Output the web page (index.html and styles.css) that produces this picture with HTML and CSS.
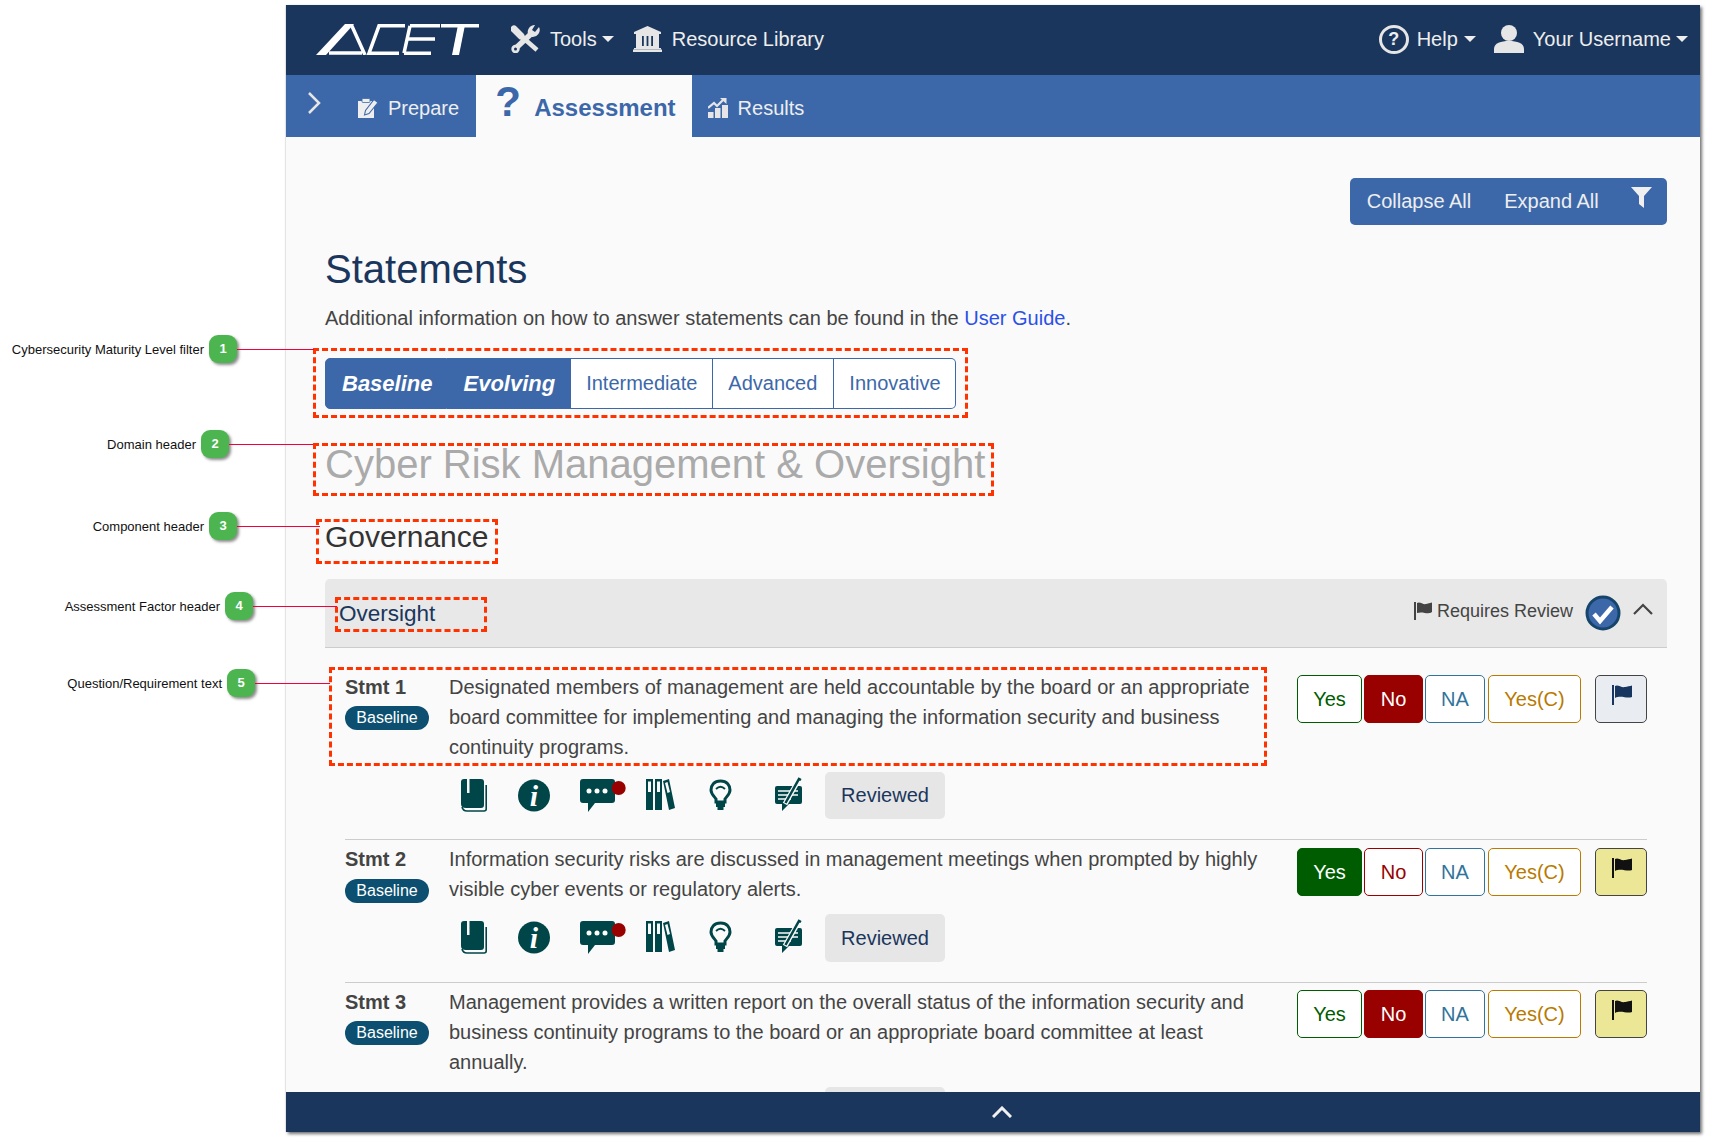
FILE: index.html
```html
<!DOCTYPE html>
<html lang="en">
<head>
    <meta charset="UTF-8">
    <title>ACET - Statements</title>
    <link rel="stylesheet" href="styles.css">
</head>
<body>
    <div class="app">
        <header class="topnav">
            <svg class="logo" viewBox="0 0 163 31" aria-label="ACET">
                <polygon points="0,31 29,0 38,0 10,31" fill="#fff"/>
                <path d="M35 0 L49 31 M13 29 H46 M89 1.8 H63 L53 29.200 H83 M94 1.8 H124 M91 15 H119 M88 29.200 H115 M94 1.8 L88 29.200 M125 1.8 H163" stroke="#fff" stroke-width="3.500" fill="none"/>
                <polygon points="142,1 149,1 143,31 136,31" fill="#fff"/>
            </svg>
            <a class="nav-link nav-tools">
                <svg class="nav-ico" viewBox="0 0 29 28">
                    <path d="M3 4 L10 11" stroke="#e6e6e6" stroke-width="7" stroke-linecap="round"/>
                    <path d="M10 11 L26 25" stroke="#e6e6e6" stroke-width="4.500"/>
                    <path d="M21 8 L5 23" stroke="#e6e6e6" stroke-width="5.500"/>
                    <path d="M28 2 L24 7 L21 5 L24 0 A7 7 0 0 0 17 9 L21 12 A7 7 0 0 0 28 2 Z" fill="#e6e6e6"/>
                    <circle cx="4.500" cy="24" r="4.200" fill="#e6e6e6"/>
                    <circle cx="4.500" cy="24" r="1.500" fill="#1a365d"/>
                </svg>
                Tools<span class="caret"></span>
            </a>
            <a class="nav-link nav-library">
                <svg class="nav-ico" viewBox="0 0 29 26">
                    <polygon points="14.500,0 28,6 28,8 1,8 1,6" fill="#e6e6e6"/>
                    <rect x="3" y="8" width="23" height="14" fill="#e6e6e6"/>
                    <path d="M9 10 h1.800 v10 h-1.800 z M13.600 10 h1.800 v10 h-1.800 z M18.200 10 h1.800 v10 h-1.800 z" fill="#1a365d"/>
                    <rect x="1" y="22" width="27" height="1.500" fill="#e6e6e6"/>
                    <rect x="0" y="23.500" width="29" height="2.500" fill="#e6e6e6"/>
                </svg>
                Resource Library
            </a>
            <div class="nav-right">
                <a class="nav-link nav-help"><span class="help-ico">?</span>Help<span class="caret"></span></a>
                <a class="nav-link nav-user">
                    <svg class="nav-ico user-ico" viewBox="0 0 30 28">
                        <circle cx="15" cy="8" r="8" fill="#e6e6e6"/>
                        <path d="M0 28 V24 C0 18 7 16 15 16 C23 16 30 18 30 24 V28 Z" fill="#e6e6e6"/>
                    </svg>
                    Your Username<span class="caret"></span>
                </a>
            </div>
        </header>

        <nav class="subnav">
            <svg class="side-toggle" viewBox="0 0 14 22"><polyline points="2,1 12,11 2,21" fill="none" stroke="#e6e6e6" stroke-width="2.500"/></svg>
            <a class="tab tab-prepare">
                <svg class="tab-ico" viewBox="0 0 20 20">
                    <rect x="0" y="3" width="16" height="17" fill="#eee"/>
                    <rect x="4" y="0.500" width="8" height="4" rx="1" fill="#eee" stroke="#3c68aa" stroke-width="0.800"/>
                    <path d="M6.500 17 L7.500 12.500 L16 1.500 L20 4.500 L11 15.500 Z" fill="#eee" stroke="#3c68aa" stroke-width="1.100"/>
                </svg>
                Prepare
            </a>
            <a class="tab tab-active"><span class="tab-q">?</span>Assessment</a>
            <a class="tab tab-results">
                <svg class="tab-ico" viewBox="0 0 20 20">
                    <path d="M0 14 h5.500 v6 h-5.500 z M7 10 h5.500 v10 h-5.500 z M14 7 h6 v13 h-6 z" fill="#e6e6e6"/>
                    <path d="M0 10 L6 5 L9 8 L15 2" fill="none" stroke="#e6e6e6" stroke-width="2.200"/>
                    <polygon points="12,0 18.500,0 18.500,6" fill="#e6e6e6"/>
                </svg>
                Results
            </a>
        </nav>

        <main class="content">
            <div class="toolbar">
                <div class="btn-group">
                    <button class="tool-btn tool-collapse">Collapse All</button>
                    <button class="tool-btn tool-expand">Expand All</button>
                    <button class="tool-btn tool-filter">
                        <svg class="filter-ico" viewBox="0 0 21 21"><polygon points="0,0 21,0 13,9 13,21 8,17 8,9" fill="#f0f0f0"/></svg>
                    </button>
                </div>
            </div>

            <h1 class="page-title">Statements</h1>
            <p class="intro">Additional information on how to answer statements can be found in the <a class="link">User Guide</a>.</p>

            <div class="levels">
                <span class="level level-on level-first">Baseline</span>
                <span class="level level-on level-second">Evolving</span>
                <span class="level level-third">Intermediate</span>
                <span class="level">Advanced</span>
                <span class="level level-last">Innovative</span>
            </div>

            <h2 class="domain">Cyber Risk Management &amp; Oversight</h2>
            <h3 class="component">Governance</h3>

            <div class="factor">
                <span class="factor-name">Oversight</span>
                <span class="review-note">
                    <svg class="note-flag" viewBox="0 0 18 18"><path d="M0 0 H2 V18 H0 Z M3 1 C6 -1 9 3 12 2 C14 1.500 16 1 18 0.500 V10 C14 13 9 9 3 11 Z" fill="#444"/></svg>
                    Requires Review
                </span>
                <svg class="check-ico" viewBox="0 0 36 36">
                    <circle cx="18" cy="18" r="16" fill="#3c68aa" stroke="#16456b" stroke-width="3"/>
                    <polyline points="9,19 15,26 27,12" fill="none" stroke="#fff" stroke-width="4.500"/>
                </svg>
                <svg class="collapse-ico" viewBox="0 0 20 12"><polyline points="1,11 10,2 19,11" fill="none" stroke="#444" stroke-width="2.200"/></svg>
            </div>

            <section class="stmt stmt-first">
                <div class="stmt-head">
                    <b class="stmt-no">Stmt 1</b>
                    <span class="badge">Baseline</span>
                </div>
                <div class="stmt-body">
                    <p class="stmt-text">Designated members of management are held accountable by the board or an appropriate board committee for implementing and managing the information security and business continuity programs.</p>
                    <div class="tools">
                        <svg class="ico ico-book" viewBox="0 0 26 33"><use href="#i-book"/></svg>
                        <svg class="ico ico-info" viewBox="0 0 32 33"><use href="#i-info"/></svg>
                        <svg class="ico ico-chat" viewBox="0 0 46 33"><use href="#i-chat"/></svg>
                        <svg class="ico ico-lib" viewBox="0 0 29 31"><use href="#i-lib"/></svg>
                        <svg class="ico ico-bulb" viewBox="0 0 23 31"><use href="#i-bulb"/></svg>
                        <svg class="ico ico-note" viewBox="0 0 27 34"><use href="#i-note"/></svg>
                        <button class="reviewed">Reviewed</button>
                    </div>
                </div>
                <div class="answers">
                    <button class="ans ans-yes">Yes</button>
                    <button class="ans ans-no on">No</button>
                    <button class="ans ans-na">NA</button>
                    <button class="ans ans-alt">Yes(C)</button>
                    <button class="flag-btn">
                        <svg class="flag-ico" viewBox="0 0 20 20"><path d="M0 0 H2 V20 H0 Z M3 1 C6 -1 9 3 13 2 C15 1.500 18 1 20 0.500 V12 C15 14 9 10 3 13 Z" fill="#16365f"/></svg>
                    </button>
                </div>
            </section>

            <section class="stmt stmt-second">
                <div class="stmt-head">
                    <b class="stmt-no">Stmt 2</b>
                    <span class="badge">Baseline</span>
                </div>
                <div class="stmt-body">
                    <p class="stmt-text">Information security risks are discussed in management meetings when prompted by highly visible cyber events or regulatory alerts.</p>
                    <div class="tools">
                        <svg class="ico ico-book" viewBox="0 0 26 33"><use href="#i-book"/></svg>
                        <svg class="ico ico-info" viewBox="0 0 32 33"><use href="#i-info"/></svg>
                        <svg class="ico ico-chat" viewBox="0 0 46 33"><use href="#i-chat"/></svg>
                        <svg class="ico ico-lib" viewBox="0 0 29 31"><use href="#i-lib"/></svg>
                        <svg class="ico ico-bulb" viewBox="0 0 23 31"><use href="#i-bulb"/></svg>
                        <svg class="ico ico-note" viewBox="0 0 27 34"><use href="#i-note"/></svg>
                        <button class="reviewed">Reviewed</button>
                    </div>
                </div>
                <div class="answers">
                    <button class="ans ans-yes on">Yes</button>
                    <button class="ans ans-no">No</button>
                    <button class="ans ans-na">NA</button>
                    <button class="ans ans-alt">Yes(C)</button>
                    <button class="flag-btn flagged">
                        <svg class="flag-ico" viewBox="0 0 20 20"><path d="M0 0 H2 V20 H0 Z M3 1 C6 -1 9 3 13 2 C15 1.500 18 1 20 0.500 V12 C15 14 9 10 3 13 Z" fill="#111"/></svg>
                    </button>
                </div>
            </section>

            <section class="stmt stmt-third">
                <div class="stmt-head">
                    <b class="stmt-no">Stmt 3</b>
                    <span class="badge">Baseline</span>
                </div>
                <div class="stmt-body">
                    <p class="stmt-text">Management provides a written report on the overall status of the information security and business continuity programs to the board or an appropriate board committee at least annually.</p>
                    <div class="tools">
                        <!-- only the top edge shows above the bottom bar -->
                        <button class="reviewed reviewed-only" aria-label="Reviewed"></button>
                    </div>
                </div>
                <div class="answers">
                    <button class="ans ans-yes">Yes</button>
                    <button class="ans ans-no on">No</button>
                    <button class="ans ans-na">NA</button>
                    <button class="ans ans-alt">Yes(C)</button>
                    <button class="flag-btn flagged">
                        <svg class="flag-ico" viewBox="0 0 20 20"><path d="M0 0 H2 V20 H0 Z M3 1 C6 -1 9 3 13 2 C15 1.500 18 1 20 0.500 V12 C15 14 9 10 3 13 Z" fill="#111"/></svg>
                    </button>
                </div>
            </section>
        </main>

        <footer class="bottombar">
            <svg class="bottom-ico" viewBox="0 0 20 12"><polyline points="1,11 10,2 19,11" fill="none" stroke="#f0f0f0" stroke-width="3"/></svg>
        </footer>
    </div>

    <!-- callouts on top of the screenshot -->
    <div class="mark mark-1"></div>
    <div class="mark mark-2"></div>
    <div class="mark mark-3"></div>
    <div class="mark mark-4"></div>
    <div class="mark mark-5"></div>

    <div class="callout callout-1"><span class="callout-label">Cybersecurity Maturity Level filter</span><span class="callout-num">1</span><span class="callout-line"></span></div>
    <div class="callout callout-2"><span class="callout-label">Domain header</span><span class="callout-num">2</span><span class="callout-line"></span></div>
    <div class="callout callout-3"><span class="callout-label">Component header</span><span class="callout-num">3</span><span class="callout-line"></span></div>
    <div class="callout callout-4"><span class="callout-label">Assessment Factor header</span><span class="callout-num">4</span><span class="callout-line"></span></div>
    <div class="callout callout-5"><span class="callout-label">Question/Requirement text</span><span class="callout-num">5</span><span class="callout-line"></span></div>

    <!-- shared icons for the statement rows -->
    <svg class="sprites">
        <defs>
            <g id="i-book">
                <path d="M3 0 H20 Q23 0 23 3 V26 Q23 29 20 29 H5 Q0 29 0 25 V3 Q0 0 3 0 Z" fill="#004548"/>
                <rect x="6" y="0" width="2.500" height="14" fill="#fafafa"/>
                <path d="M1 28 Q2 32 6 32 H23 Q25.200 32 25.200 30 V6" fill="none" stroke="#004548" stroke-width="1.600"/>
            </g>
            <g id="i-info">
                <circle cx="16" cy="16.500" r="16" fill="#004548"/>
                <text x="16" y="27" text-anchor="middle" class="info-i">i</text>
            </g>
            <g id="i-chat">
                <path d="M3 0 H32 Q35 0 35 3 V21 Q35 24 32 24 H15 L8 33 V24 H3 Q0 24 0 21 V3 Q0 0 3 0 Z" fill="#004548"/>
                <circle cx="9" cy="12" r="2.500" fill="#fff"/>
                <circle cx="17" cy="12" r="2.500" fill="#fff"/>
                <circle cx="25" cy="12" r="2.500" fill="#fff"/>
                <circle cx="38.700" cy="9" r="7" fill="#990000"/>
            </g>
            <g id="i-lib">
                <path d="M0 0 H7 V31 H0 Z M9 0 H16 V31 H9 Z M17 2 L23 0 L29 29 L23 31 Z" fill="#004548"/>
                <path d="M2 2.500 H5 V13 H2 Z M11 2.500 H14 V13 H11 Z M19 4 L21.500 3 L24 13 L21.500 14 Z" fill="#fafafa"/>
            </g>
            <g id="i-bulb">
                <path d="M11.500 2 C5 2 2 6.500 2 11 C2 15 5 17 7 20 V23 H16 V20 C18 17 21 15 21 11 C21 6.500 18 2 11.500 2 Z" fill="none" stroke="#004548" stroke-width="3"/>
                <path d="M7 10 Q11.500 5.500 16 10" fill="none" stroke="#004548" stroke-width="1.800"/>
                <rect x="7" y="23" width="9" height="5" fill="#004548"/>
                <rect x="8.500" y="28" width="6" height="3" fill="#004548"/>
            </g>
            <g id="i-note">
                <path d="M2 9 H25 Q27 9 27 11 V25 Q27 27 25 27 H14 L7 34 V27 H2 Q0 27 0 25 V11 Q0 9 2 9 Z" fill="#004548"/>
                <path d="M3 14 H23 M3 18 H23 M3 22 H16" stroke="#fafafa" stroke-width="1.300"/>
                <path d="M10 27 L23 4" stroke="#fafafa" stroke-width="5"/>
                <path d="M10.500 26 L24 2 L26 3" stroke="#004548" stroke-width="2.500" fill="none"/>
            </g>
        </defs>
    </svg>
</body>
</html>
```

FILE: styles.css
```css
* {
    margin: 0;
    padding: 0;
    box-sizing: border-box;
}
html,
body {
    height: 1140px;
    overflow: hidden;
    background: #fff;
}
body {
    position: relative;
    padding: 5px 0 0 286px;
    font-family: "Liberation Sans", Arial, sans-serif;
    font-size: 20px;
    color: #444;
}
button {
    font-family: inherit;
    font-size: 20px;
    cursor: pointer;
}
.sprites {
    position: absolute;
    width: 0;
    height: 0;
}

/* app frame */
.app {
    width: 1414px;
    height: 1127px;
    display: flex;
    flex-direction: column;
    background: #fafafa;
    box-shadow: 2px 2px 3px rgba(0, 0, 0, 0.55), -1px 0 1px rgba(0, 0, 0, 0.08);
}

/* top nav */
.topnav {
    height: 70px;
    flex: none;
    display: flex;
    align-items: center;
    background: #1a365d;
    color: #eee;
    padding: 0 12px 2px 30px;
}
.logo {
    width: 163px;
    height: 31px;
    margin-right: 32px;
}
.nav-link {
    display: flex;
    align-items: center;
}
.nav-ico {
    width: 29px;
    height: 28px;
    margin-right: 10px;
}
.nav-library {
    margin-left: 19px;
}
.nav-library .nav-ico {
    margin-right: 10px;
}
.caret {
    width: 0;
    height: 0;
    margin-left: 5px;
    border-left: 6px solid transparent;
    border-right: 6px solid transparent;
    border-top: 6.500px solid #eee;
}
.nav-right {
    margin-left: auto;
    display: flex;
    align-items: center;
}
.nav-help .caret {
    margin-left: 6px;
}
.help-ico {
    width: 30px;
    height: 29px;
    margin-right: 8px;
    border: 3px solid #e6e6e6;
    border-radius: 50%;
    text-align: center;
    font-weight: bold;
    font-size: 18px;
    line-height: 23px;
}
.nav-user {
    margin-left: 18px;
}
.user-ico {
    width: 30px;
    margin-right: 9px;
}
.nav-user .caret {
    margin-left: 5px;
}

/* second nav */
.subnav {
    height: 62px;
    flex: none;
    display: flex;
    align-items: stretch;
    background: #3c68aa;
    color: #eee;
    padding-left: 21px;
}
.side-toggle {
    width: 14px;
    height: 22px;
    margin: 17px 37px 0 0;
}
.tab {
    display: flex;
    align-items: center;
    padding-top: 4px;
}
.tab-ico {
    width: 20px;
    height: 20px;
    margin-right: 10px;
}
.tab-active {
    margin-left: 17px;
    padding: 4px 16px 0 19px;
    background: #fafafa;
    color: #3c68aa;
    font-size: 24px;
    font-weight: bold;
}
.tab-q {
    width: 23px;
    margin: -12px 16px 0 0;
    font-size: 42px;
    line-height: 42px;
}
.tab-results {
    margin-left: 16px;
}

/* content */
.content {
    flex: 1;
    min-height: 0;
    overflow: hidden;
    padding: 41px 33px 0 39px;
}
.toolbar {
    display: flex;
    justify-content: flex-end;
}
.btn-group {
    display: flex;
    height: 47px;
    border-radius: 5px;
    overflow: hidden;
}
.tool-btn {
    background: #3c68aa;
    color: #eee;
    border: 0;
}
.tool-collapse {
    width: 138px;
}
.tool-expand {
    width: 127px;
}
.tool-filter {
    width: 52px;
}
.filter-ico {
    display: block;
    width: 21px;
    height: 21px;
    margin: -8px 0 0 16px;
}
.page-title {
    margin-top: 20px;
    font-size: 40px;
    line-height: 48px;
    font-weight: normal;
    color: #1a365d;
}
.intro {
    margin-top: 10px;
    line-height: 30px;
}
.link {
    color: #2a50e8;
}
.levels {
    display: flex;
    height: 51px;
    margin-top: 25px;
}
.level {
    display: flex;
    align-items: center;
    padding: 0 15.500px 1px;
    background: #fff;
    border: 1px solid #3c68aa;
    border-left-width: 0;
    color: #3c68aa;
}
.level-on {
    background: #3c68aa;
    color: #fff;
    font-size: 22px;
    font-style: italic;
    font-weight: bold;
}
.level-first {
    padding: 0 13px 0 16px;
    border-radius: 5px 0 0 5px;
    border-left-width: 1px;
}
.level-second {
    padding: 0 15px 0 17px;
}
.level-third {
    padding: 0 14.500px 1px 15px;
}
.level-last {
    padding-right: 14px;
    border-radius: 0 5px 5px 0;
}
.domain {
    margin-top: 31px;
    font-size: 40px;
    line-height: 48px;
    font-weight: normal;
    color: #aaa;
}
.component {
    margin-top: 30px;
    font-size: 30px;
    line-height: 38px;
    font-weight: normal;
    color: #333;
}
.factor {
    height: 69px;
    margin-top: 23px;
    display: flex;
    align-items: center;
    padding: 0 14px 0 14px;
    background: #e8e8e8;
    border-bottom: 1px solid #ccc;
    border-radius: 5px 5px 0 0;
}
.factor-name {
    font-size: 22.500px;
    color: #1a365d;
    margin-top: 2px;
}
.review-note {
    margin: -4px 12px 0 auto;
    display: flex;
    align-items: center;
    font-size: 18px;
}
.note-flag {
    width: 18px;
    height: 18px;
    margin-right: 5px;
}
.check-ico {
    width: 36px;
    height: 36px;
    margin: 0 12px 0 0;
}
.collapse-ico {
    width: 20px;
    height: 12px;
    margin-top: -9px;
}

/* statements */
.stmt {
    display: flex;
    width: 1302px;
    margin-left: 20px;
    padding: 5px 0 20px;
    border-bottom: 1px solid #ccc;
}
.stmt-first {
    margin-top: 19px;
}
.stmt-second {
    padding-top: 4px;
}
.stmt-third {
    padding-top: 4px;
}
.stmt-head {
    width: 104px;
    flex: none;
}
.stmt-no {
    display: block;
    line-height: 30px;
    color: #444;
}
.badge {
    display: block;
    width: 84px;
    height: 24px;
    margin-top: 4px;
    border-radius: 12px;
    background: #0c4f70;
    color: #fff;
    font-size: 16px;
    line-height: 24px;
    text-align: center;
}
.stmt-second .badge {
    margin-top: 5px;
}
.stmt-body {
    width: 848px;
    flex: none;
}
.stmt-text {
    width: 836px;
    line-height: 30px;
}
.tools {
    display: flex;
    align-items: flex-start;
    height: 47px;
    margin-top: 10px;
}
.stmt-second .tools {
    height: 48px;
}
.ico {
    flex: none;
    margin-top: 7px;
}
.ico-book {
    width: 26px;
    height: 33px;
    margin-left: 12px;
}
.ico-info {
    width: 32px;
    height: 33px;
    margin-left: 31px;
}
.ico-chat {
    width: 46px;
    height: 33px;
    margin-left: 30px;
}
.ico-lib {
    width: 29px;
    height: 31px;
    margin-left: 20px;
}
.ico-bulb {
    width: 23px;
    height: 31px;
    margin-left: 34px;
}
.ico-note {
    width: 27px;
    height: 34px;
    margin: 5px 0 0 43px;
}
.info-i {
    font-family: "Liberation Serif", serif;
    font-size: 30px;
    font-style: italic;
    font-weight: bold;
    fill: #fff;
}
.reviewed {
    width: 120px;
    height: 47px;
    margin-left: 23px;
    background: #e6e6e6;
    border: 0;
    border-radius: 5px;
    color: #1a365d;
}
.stmt-second .reviewed {
    height: 48px;
}
.reviewed-only {
    margin-left: 376px;
}
.answers {
    display: flex;
    align-items: flex-start;
    padding-top: 3px;
}
.stmt-second .answers {
    padding-top: 4px;
}
.ans {
    height: 48px;
    background: #fff;
    border: 1px solid;
    border-radius: 5px;
}
.ans-yes {
    width: 65px;
    color: #005c00;
    border-color: #005c00;
}
.ans-no {
    width: 59px;
    margin-left: 2px;
    color: #990000;
    border-color: #990000;
}
.ans-na {
    width: 60px;
    margin-left: 2px;
    color: #31749b;
    border-color: #31749b;
}
.ans-alt {
    width: 93px;
    margin-left: 3px;
    color: #b97a00;
    border-color: #b97a00;
}
.ans-yes.on {
    background: #005c00;
    color: #fff;
}
.ans-no.on {
    background: #990000;
    color: #fff;
}
.flag-btn {
    width: 52px;
    height: 48px;
    margin-left: 14px;
    background: #e9ecf1;
    border: 1px solid #444;
    border-radius: 5px;
}
.flagged {
    background: #ebe797;
}
.flag-ico {
    display: block;
    width: 20px;
    height: 20px;
    margin: -8px 0 0 16px;
}

/* bottom bar */
.bottombar {
    height: 40px;
    flex: none;
    display: flex;
    align-items: center;
    justify-content: center;
    background: #1a365d;
}
.bottom-ico {
    width: 20px;
    height: 12px;
    margin-left: 18px;
}

/* red dashed boxes over the screenshot */
.mark {
    position: absolute;
    border: 3px dashed #ff3300;
}
.mark-1 {
    left: 313px;
    top: 348px;
    width: 655px;
    height: 70px;
}
.mark-2 {
    left: 313px;
    top: 443px;
    width: 681px;
    height: 53px;
}
.mark-3 {
    left: 316px;
    top: 519px;
    width: 182px;
    height: 45px;
}
.mark-4 {
    left: 335px;
    top: 597px;
    width: 152px;
    height: 35px;
}
.mark-5 {
    left: 329px;
    top: 667px;
    width: 938px;
    height: 99px;
}

/* numbered callouts in the left margin */
.callout {
    position: absolute;
    display: flex;
    align-items: center;
    justify-content: flex-end;
    left: 0;
    height: 28px;
}
.callout-label {
    margin: 1px 5px 0 0;
    font-size: 13px;
    color: #111;
    white-space: nowrap;
}
.callout-num {
    width: 28px;
    height: 28px;
    flex: none;
    border-radius: 9px;
    background: #4cb550;
    color: #fff;
    font-size: 13px;
    font-weight: bold;
    line-height: 28px;
    text-align: center;
    box-shadow: 2px 2px 3px rgba(0, 0, 0, 0.45);
}
.callout-line {
    height: 1px;
    flex: none;
    background: #f0003c;
}
.callout-1 {
    top: 335px;
    width: 314px;
}
.callout-1 .callout-line {
    width: 77px;
}
.callout-2 {
    top: 430px;
    width: 313px;
}
.callout-2 .callout-line {
    width: 84px;
}
.callout-3 {
    top: 512px;
    width: 320px;
}
.callout-3 .callout-line {
    width: 83px;
}
.callout-4 {
    top: 592px;
    width: 337px;
}
.callout-4 .callout-line {
    width: 84px;
}
.callout-5 {
    top: 669px;
    width: 330px;
}
.callout-5 .callout-line {
    width: 75px;
}
```
